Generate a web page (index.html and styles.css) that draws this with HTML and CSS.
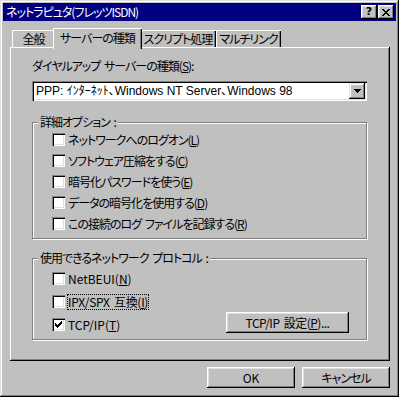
FILE: index.html
```html
<!DOCTYPE html>
<html lang="ja">
<head>
    <meta charset="UTF-8">
    <title>ネットラピュタ(フレッツISDN)</title>
    <link rel="stylesheet" href="styles.css">
</head>
<body>

    <div class="window">
        <div class="titlebar">
            <span class="title">ネットラピュタ(フレッツISDN)</span>
            <div class="title-buttons">
                <button class="tbtn help">?</button>
                <button class="tbtn close">
                    <svg width="8" height="7" viewBox="0 0 8 7" shape-rendering="crispEdges">
                        <path d="M0 0h2v1h-2zM6 0h2v1h-2zM1 1h2v1h-2zM5 1h2v1h-2zM2 2h4v1h-4zM3 3h2v1h-2zM2 4h4v1h-4zM1 5h2v1h-2zM5 5h2v1h-2zM0 6h2v1h-2zM6 6h2v1h-2z" fill="#000"/>
                    </svg>
                </button>
            </div>
        </div>

        <div class="content">
            <div class="tabs">
                <div class="tab tab-general">全般</div>
                <div class="tab tab-server active">サーバーの種類</div>
                <div class="tab tab-script">スクリプト処理</div>
                <div class="tab tab-multi">マルチリンク</div>
            </div>

            <div class="panel">
                <div class="field-label">ダイヤルアップ サーバーの種類(<u>S</u>):</div>
                <div class="combo">
                    <span class="combo-text">PPP: ｲﾝﾀｰﾈｯﾄ､Windows NT Server､Windows 98</span>
                    <span class="combo-btn">
                        <svg width="7" height="4" viewBox="0 0 7 4" shape-rendering="crispEdges">
                            <path d="M0 0h7v1h-7zM1 1h5v1h-5zM2 2h3v1h-3zM3 3h1v1h-1z" fill="#000"/>
                        </svg>
                    </span>
                </div>

                <div class="group group-options">
                    <span class="group-title">詳細オプション :</span>
                    <div class="check"><span class="box"></span><span class="check-text">ネットワークへのログオン(<u>L</u>)</span></div>
                    <div class="check"><span class="box"></span><span class="check-text">ソフトウェア圧縮をする(<u>C</u>)</span></div>
                    <div class="check"><span class="box"></span><span class="check-text">暗号化パスワードを使う(<u>E</u>)</span></div>
                    <div class="check"><span class="box"></span><span class="check-text">データの暗号化を使用する(<u>D</u>)</span></div>
                    <div class="check"><span class="box"></span><span class="check-text">この接続のログ ファイルを記録する(<u>R</u>)</span></div>
                </div>

                <div class="group group-protocols">
                    <span class="group-title">使用できるネットワーク プロトコル :</span>
                    <div class="check"><span class="box"></span><span class="check-text latin">NetBEUI(<u>N</u>)</span></div>
                    <div class="check"><span class="box"></span><span class="check-text focused">IPX/SPX 互換(<u>I</u>)</span></div>
                    <div class="check check-last">
                        <span class="box">
                            <svg width="7" height="7" viewBox="0 0 7 7" shape-rendering="crispEdges">
                                <path d="M6 0h1v1h-1zM5 1h2v1h-2zM0 2h1v1h-1zM4 2h3v1h-3zM0 3h2v1h-2zM3 3h3v1h-3zM0 4h5v1h-5zM1 5h3v1h-3zM2 6h1v1h-1z" fill="#000"/>
                            </svg>
                        </span>
                        <span class="check-text latin">TCP/IP(<u>T</u>)</span>
                        <button class="btn btn-tcp">TCP/IP 設定(<u>P</u>)...</button>
                    </div>
                </div>
            </div>

            <div class="footer">
                <button class="btn latin">OK</button>
                <button class="btn">キャンセル</button>
            </div>
        </div>
    </div>

</body>
</html>
```

FILE: styles.css
```css
* {
    box-sizing: border-box;
}

body {
    margin: 0;
    background-color: #c0c0c0;
    color: #000;
    font-family: "Noto Sans CJK JP", sans-serif;
    font-size: 12px;
    line-height: 14px;
    letter-spacing: -1px;
    word-spacing: 2px;
    font-feature-settings: "palt";
}

button {
    font: inherit;
    letter-spacing: inherit;
    word-spacing: inherit;
    color: #000;
    border: none;
    padding: 0;
    margin: 0;
    background-color: #c0c0c0;
}

u {
    text-decoration-thickness: 1px;
    text-underline-offset: 1px;
}

.latin {
    letter-spacing: 0;
}

.window {
    width: 399px;
    height: 397px;
    padding: 3px;
    background-color: #c0c0c0;
    box-shadow: inset -1px -1px #000, inset 1px 1px #dfdfdf, inset -2px -2px #808080, inset 2px 2px #fff;
}

/* title bar */
.titlebar {
    height: 18px;
    display: flex;
    align-items: center;
    justify-content: space-between;
    padding: 0 2px;
    background-color: #000080;
    color: #fff;
}

.title {
    padding-left: 1px;
}

.title-buttons {
    display: flex;
    gap: 1px;
}

.tbtn {
    width: 16px;
    height: 14px;
    display: flex;
    align-items: center;
    justify-content: center;
    font-family: "DejaVu Sans", sans-serif;
    font-weight: bold;
    font-size: 11px;
    letter-spacing: 0;
    box-shadow: inset -1px -1px #000, inset 1px 1px #fff, inset -2px -2px #808080, inset 2px 2px #dfdfdf;
}

.tbtn svg {
    display: block;
}

/* body */
.content {
    padding: 0 6px 0 7px;
}

.tabs {
    display: flex;
    align-items: flex-end;
    height: 26px;
    padding-left: 2px;
}

.tab {
    height: 17px;
    display: flex;
    align-items: center;
    justify-content: center;
    padding-top: 1px;
    background-color: #c0c0c0;
    box-shadow: inset 1px 1px #fff, inset -1px 0 #000, inset -2px 0 #808080;
}

.tab-general { width: 43px; }
.tab-server { width: 85px; }
.tab-script { width: 76px; }
.tab-multi { width: 65px; }

.tab.active {
    position: relative;
    z-index: 1;
    width: 89px;
    height: 21px;
    margin: 0 -2px -2px -2px;
    padding-bottom: 3px;
}

.panel {
    height: 314px;
    padding: 12px 23px 0 22px;
    box-shadow: inset -1px -1px #000, inset 1px 1px #fff, inset -2px -2px #808080;
}

.field-label {
    height: 14px;
}

/* combo box */
.combo {
    display: flex;
    align-items: center;
    height: 20px;
    margin-top: 8px;
    padding: 2px;
    background-color: #fff;
    box-shadow: inset 1px 1px #808080, inset 2px 2px #000, inset -1px -1px #fff, inset -2px -2px #dfdfdf;
}

.combo-text {
    flex: 1;
    padding-left: 2px;
    font-family: "Liberation Sans", "Noto Sans CJK JP", sans-serif;
    letter-spacing: 0;
    word-spacing: 0;
}

.combo-btn {
    width: 16px;
    height: 16px;
    display: flex;
    align-items: center;
    justify-content: center;
    background-color: #c0c0c0;
    box-shadow: inset -1px -1px #000, inset 1px 1px #dfdfdf, inset -2px -2px #808080, inset 2px 2px #fff;
}

.combo-btn svg {
    display: block;
}

/* group boxes */
.group {
    position: relative;
    border: 1px solid #808080;
    box-shadow: inset 1px 1px #fff, 1px 1px #fff;
    padding-left: 19px;
}

.group-title {
    position: absolute;
    top: -8px;
    left: 5px;
    padding: 0 2px;
    background-color: #c0c0c0;
}

.group-options {
    height: 117px;
    margin-top: 21px;
    padding-top: 6px;
}

.group-protocols {
    height: 82px;
    margin-top: 19px;
    padding-top: 8px;
}

.check {
    display: flex;
    align-items: center;
    height: 21px;
}

.group-protocols .check {
    height: 23px;
}

.box {
    width: 13px;
    height: 13px;
    flex: none;
    margin-right: 3px;
    display: flex;
    align-items: center;
    justify-content: center;
    background-color: #fff;
    box-shadow: inset 1px 1px #808080, inset 2px 2px #000, inset -1px -1px #fff, inset -2px -2px #dfdfdf;
}

.box svg {
    display: block;
}

.focused {
    outline: 1px dotted #000;
    letter-spacing: -0.3px;
    word-spacing: 2px;
}

/* buttons */
.btn {
    height: 21px;
    width: 88px;
    box-shadow: inset -1px -1px #000, inset 1px 1px #fff, inset -2px -2px #808080, inset 2px 2px #dfdfdf;
}

.btn-tcp {
    width: 123px;
    margin-left: auto;
    margin-right: 17px;
    align-self: flex-start;
    margin-top: -1px;
    letter-spacing: -0.5px;
    word-spacing: 2px;
}

.footer {
    display: flex;
    justify-content: flex-end;
    gap: 7px;
    padding-top: 6px;
}
```
